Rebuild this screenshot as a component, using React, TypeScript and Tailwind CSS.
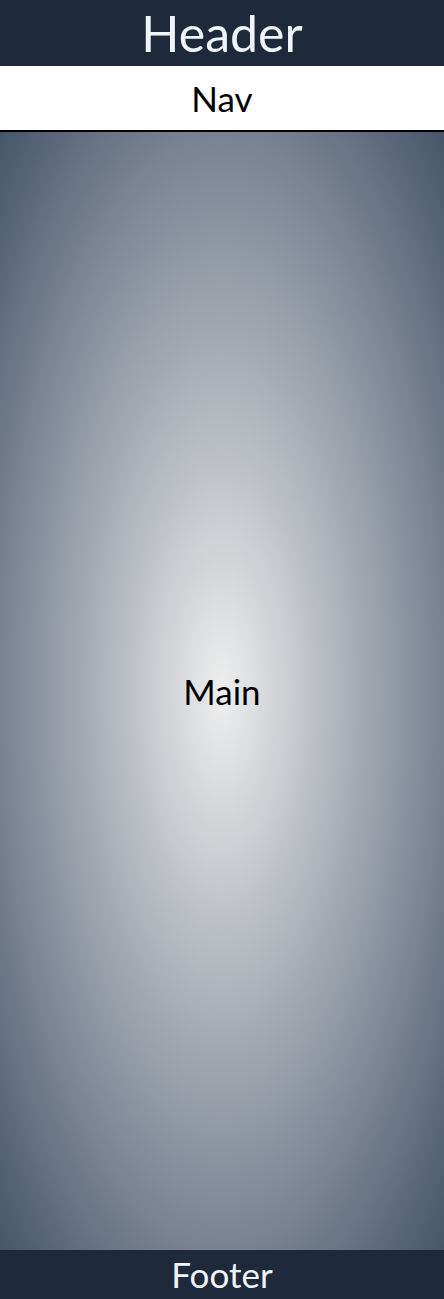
import React from "react";

const App: React.FC = () => {
  return (
    <div className="flex flex-col h-[1299px] w-full font-['Lato',sans-serif]">
      {/* Header */}
      <header className="flex items-center justify-center h-[66px] bg-[#1e293b] text-[#f1f5f9] text-[50px] leading-none">
        Header
      </header>

      {/* Nav */}
      <nav className="flex items-center justify-center h-[66px] bg-white text-black text-[35px] leading-none border-b-2 border-black">
        Nav
      </nav>

      {/* Main */}
      <main className="flex-1 flex items-center justify-center text-black text-[35px] leading-none bg-[radial-gradient(#eeeeee,#475569)]">
        Main
      </main>

      {/* Footer */}
      <footer className="flex items-center justify-center h-[49px] bg-[#1e293b] text-[#f1f5f9] text-[35px] leading-none">
        Footer
      </footer>
    </div>
  );
};

export default App;
